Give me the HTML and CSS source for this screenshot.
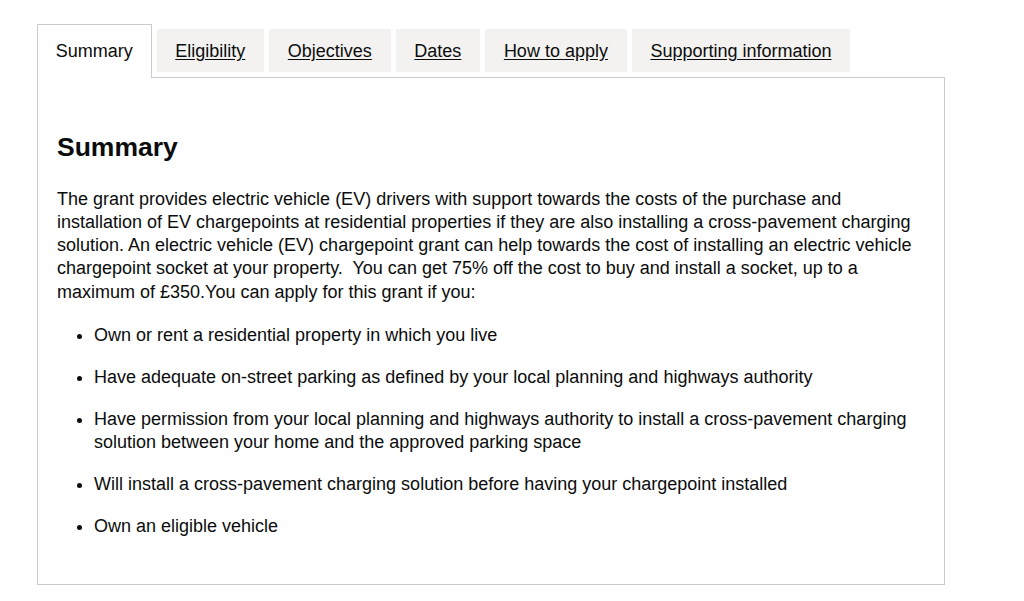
FILE: index.html
```html
<!DOCTYPE html>
<html lang="en">
<head>
  <meta charset="UTF-8">
  <title>Summary</title>
  <link rel="stylesheet" href="styles.css">
</head>
<body>
  <div class="tabs">
    <ul class="tabs-list">
      <li class="tab tab-selected"><a href="#summary">Summary</a></li>
      <li class="tab"><a href="#eligibility">Eligibility</a></li>
      <li class="tab"><a href="#objectives">Objectives</a></li>
      <li class="tab"><a href="#dates">Dates</a></li>
      <li class="tab"><a href="#how-to-apply">How to apply</a></li>
      <li class="tab"><a href="#supporting-information">Supporting information</a></li>
    </ul>

    <div class="tab-panel" id="summary">
      <h2>Summary</h2>
      <p>The grant provides electric vehicle (EV) drivers with support towards the costs of the purchase and installation of EV chargepoints at residential properties if they are also installing a cross-pavement charging solution. An electric vehicle (EV) chargepoint grant can help towards the cost of installing an electric vehicle chargepoint socket at your property.&nbsp; You can get 75% off the cost to buy and install a socket, up to a maximum of £350.You can apply for this grant if you:</p>
      <ul class="bullets">
        <li>Own or rent a residential property in which you live</li>
        <li>Have adequate on-street parking as defined by your local planning and highways authority</li>
        <li>Have permission from your local planning and highways authority to install a cross-pavement charging solution between your home and the approved parking space</li>
        <li>Will install a cross-pavement charging solution before having your chargepoint installed</li>
        <li>Own an eligible vehicle</li>
      </ul>
    </div>
  </div>
</body>
</html>
```

FILE: styles.css
```css
body {
  margin: 0;
  padding: 29px 0 0 37px;
  font-family: "Liberation Sans", Arial, sans-serif;
  font-size: 18px;
  line-height: 23.2px;
  color: #0b0c0c;
  background-color: #fff;
}

.tabs {
  width: 908px;
}

.tabs-list {
  display: flex;
  align-items: flex-start;
  margin: 0;
  padding: 0;
  list-style: none;
}

.tab {
  margin: 0 5px 5px 0;
  padding: 11px 18.75px 9px;
  background-color: #f3f2f1;
}

.tab a {
  color: #0b0c0c;
  text-decoration: underline;
  text-underline-offset: 2px;
}

.tab-selected {
  margin-top: -5px;
  margin-bottom: -1px;
  padding: 15px 17.75px 15px;
  border: 1px solid #cbcbcb;
  border-bottom: none;
  background-color: #fff;
  position: relative;
}

.tab-selected a {
  text-decoration: none;
}

.tab-panel {
  padding: 54px 19px 27px;
  border: 1px solid #cbcbcb;
}

.tab-panel h2 {
  margin: 0 0 25.5px;
  font-size: 26.5px;
  line-height: 30px;
  font-weight: bold;
}

.tab-panel p {
  margin: 0 0 20px;
}

.bullets {
  margin: 0;
  padding-left: 37px;
}

.bullets li {
  margin-bottom: 18.8px;
}
```
